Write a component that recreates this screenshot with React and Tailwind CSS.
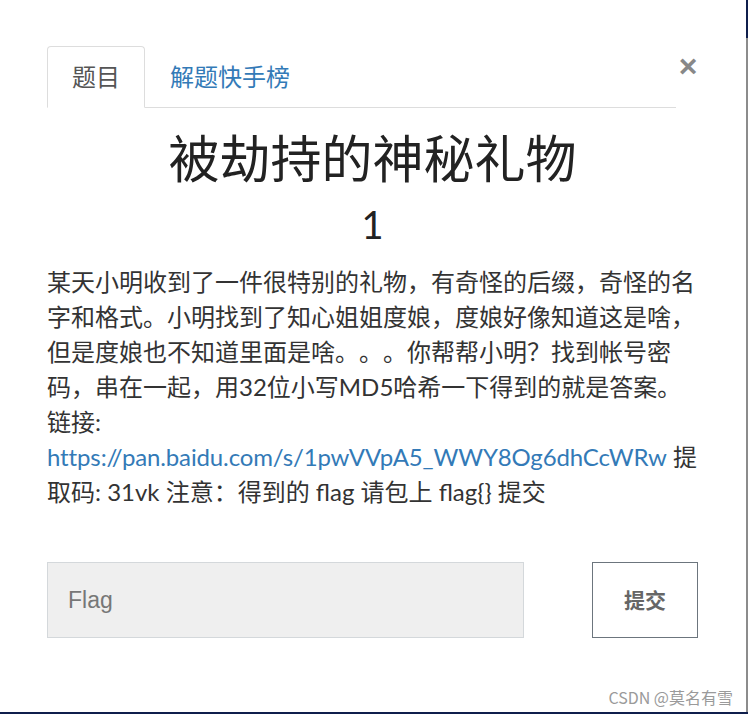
import { useState } from "react";

const FONT = { fontFamily: 'Lato, "Noto Sans CJK SC", sans-serif' };

function Tabs({ tab, setTab }) {
  return (
    <div className="flex items-start">
      <ul className="flex flex-1 border-b border-[#dddddd]">
        <li
          onClick={() => setTab(0)}
          className={
            tab === 0
              ? "-mb-px flex h-[62px] w-[98px] cursor-pointer items-center justify-center rounded-t-[4px] border border-[#dddddd] border-b-white bg-white text-[24px] text-[#555555]"
              : "-mb-px flex h-[62px] w-[98px] cursor-pointer items-center justify-center text-[24px] text-[#337ab7]"
          }
        >
          题目
        </li>
        <li
          onClick={() => setTab(1)}
          className={
            tab === 1
              ? "-mb-px ml-[2px] flex h-[62px] cursor-pointer items-center rounded-t-[4px] border border-[#dddddd] border-b-white px-[23px] text-[24px] text-[#555555]"
              : "flex h-[61px] cursor-pointer items-center pl-[25px] text-[24px] text-[#337ab7]"
          }
        >
          解题快手榜
        </li>
      </ul>
      <button
        className="ml-[2px] mt-[4px] w-[20px] text-[32px] font-bold leading-[32px] text-[#888888]"
        style={{ fontFamily: '"Liberation Sans", Arial, sans-serif' }}
      >
        ×
      </button>
    </div>
  );
}

export default function App() {
  const [tab, setTab] = useState(0);
  const [flag, setFlag] = useState("");

  return (
    <div className="flex h-[714px] w-[748px] flex-col bg-white [text-spacing-trim:space-all]" style={FONT}>
      <div className="flex flex-1">
        <div className="flex flex-1 flex-col">
          <div className="px-[47px] pr-[48px] pt-[46px]">
            <Tabs tab={tab} setTab={setTab} />

            <h1 className="mt-[21px] text-center text-[51px] font-normal leading-[60px] text-[#222222]">
              被劫持的神秘礼物
            </h1>
            <div className="mt-[13px] text-center text-[38px] leading-[44px] text-[#222222]">1</div>

            <p className="mt-[18px] text-[24px] leading-[35px] text-[#333333]">
              某天小明收到了一件很特别的礼物，有奇怪的后缀，奇怪的名字和格式。小明找到了知心姐姐度娘，度娘好像知道这是啥，但是度娘也不知道里面是啥。。。你帮帮小明？找到帐号密码，串在一起，用32位小写MD5哈希一下得到的就是答案。链接:{" "}
              <a href="#" className="tracking-[-0.13px] text-[#337ab7]">
                https://pan.baidu.com/s/1pwVVpA5_WWY8Og6dhCcWRw
              </a>{" "}
              提取码: 31vk 注意：得到的 flag 请包上 flag{"{}"} 提交
            </p>

            <div className="mt-[53px] flex justify-between">
              <input
                value={flag}
                onChange={(e) => setFlag(e.target.value)}
                placeholder="Flag"
                className="h-[76px] w-[477px] border border-[#d4d8db] bg-[#efefef] px-[20px] text-[23px] text-[#333333] outline-none placeholder:text-[#777777]"
                style={{ fontFamily: '"Liberation Sans", Arial, sans-serif' }}
              />
              <button className="h-[76px] w-[106px] border border-[#6c757d] bg-white text-[21px] font-bold text-[#666666]">
                提交
              </button>
            </div>
          </div>

          <div className="mt-auto flex justify-end pb-[5px] pr-[13px]">
            <span
              className="text-[16px] leading-[20px] text-[#9a9a9a]"
              style={{ fontFamily: '"Noto Sans CJK SC", sans-serif' }}
            >
              CSDN @莫名有雪
            </span>
          </div>
        </div>

        <div className="flex w-[2px] flex-col">
          <div className="h-[38px] bg-[#0f1e4c]" />
          <div className="flex-1 bg-[#8c8c8c]" />
        </div>
      </div>
      <div className="h-[2px] bg-[#0f1e4c]" />
    </div>
  );
}
